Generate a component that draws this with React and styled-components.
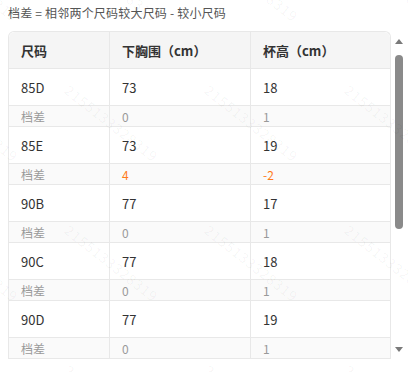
import React from 'react';
import styled, { createGlobalStyle } from 'styled-components';

const GlobalStyle = createGlobalStyle`
  body {
    margin: 0;
    background: #fff;
    font-family: "Microsoft YaHei", "Noto Sans CJK SC", "Liberation Sans", sans-serif;
  }
`;

const Page = styled.div`
  position: relative;
  padding: 4px 2px 0 8px;
  height: 372px;
  box-sizing: border-box;
  overflow: hidden;
`;

const Caption = styled.div`
  font-size: 12px;
  line-height: 17px;
  color: #555;
  letter-spacing: 0.2px;
  margin-bottom: 10px;
`;

const Frame = styled.div`
  display: flex;
  height: 328px;
`;

const Scroller = styled.div`
  flex: 1;
  overflow: hidden;
`;

const ScrollBar = styled.div`
  width: 15px;
  display: flex;
  flex-direction: column;
  background: #fff;
`;

const Arrow = styled.div`
  height: 20px;
  display: flex;
  align-items: center;
  justify-content: center;
  &::before {
    content: '';
    width: 0;
    height: 0;
    border-left: 4px solid transparent;
    border-right: 4px solid transparent;
    ${(p) => (p.$down ? 'border-top: 5px solid #7a7a7a;' : 'border-bottom: 5px solid #7a7a7a;')}
  }
`;

const Track = styled.div`
  flex: 1;
  padding: 4px 3px 0 4px;
`;

const Thumb = styled.div`
  height: 174px;
  border-radius: 4px;
  background: #8a8a8a;
`;

const Table = styled.table`
  width: 100%;
  border-collapse: separate;
  border-spacing: 0;
  border: 1px solid #e8e8e8;
  border-bottom: none;
  border-radius: 6px 6px 0 0;
  font-size: 13px;
  color: #333;
`;

const Th = styled.th`
  background: #f5f5f5;
  height: 36px;
  padding: 0 12px;
  text-align: left;
  font-weight: 700;
  color: #333;
  border-bottom: 1px solid #e8e8e8;
  border-left: ${(p) => (p.$first ? 'none' : '1px solid #e8e8e8')};
  &:first-child { border-top-left-radius: 6px; }
  &:last-child { border-top-right-radius: 6px; }
`;

const Td = styled.td`
  height: ${(p) => (p.$diff ? '20px' : '36px')};
  padding: 0 12px;
  background: ${(p) => (p.$diff ? '#fafafa' : '#fff')};
  color: ${(p) => (p.$warn ? '#ff7a1a' : p.$diff ? '#999' : '#333')};
  font-size: ${(p) => (p.$diff ? '12px' : '13px')};
  border-bottom: 1px solid #e8e8e8;
  border-left: ${(p) => (p.$first ? 'none' : '1px solid #e8e8e8')};
`;

const Watermark = styled.span`
  position: absolute;
  pointer-events: none;
  font-size: 14px;
  letter-spacing: 1px;
  color: rgba(0, 0, 0, 0.045);
  transform-origin: left top;
  transform: rotate(38deg);
  white-space: nowrap;
`;

const rows = [
  { size: '85D', chest: 73, cup: 18, dChest: 0, dCup: 1 },
  { size: '85E', chest: 73, cup: 19, dChest: 4, dCup: -2, warn: true },
  { size: '90B', chest: 77, cup: 17, dChest: 0, dCup: 1 },
  { size: '90C', chest: 77, cup: 18, dChest: 0, dCup: 1 },
  { size: '90D', chest: 77, cup: 19, dChest: 0, dCup: 1 },
];

const marks = [];
[-60, 80, 220, 360].forEach((y) => {
  [-67, 73, 213, 353].forEach((x) => marks.push({ x, y }));
});

export default function App() {
  return (
    <Page>
      <GlobalStyle />
      <Caption>档差 = 相邻两个尺码较大尺码 - 较小尺码</Caption>
      <Frame>
        <Scroller>
          <Table>
            <colgroup>
              <col style={{ width: 100 }} />
              <col style={{ width: 141 }} />
              <col />
            </colgroup>
            <thead>
              <tr>
                <Th $first>尺码</Th>
                <Th>下胸围（cm）</Th>
                <Th>杯高（cm）</Th>
              </tr>
            </thead>
            <tbody>
              {rows.map((r) => (
                <React.Fragment key={r.size}>
                  <tr>
                    <Td $first>{r.size}</Td>
                    <Td>{r.chest}</Td>
                    <Td>{r.cup}</Td>
                  </tr>
                  <tr>
                    <Td $first $diff>档差</Td>
                    <Td $diff $warn={r.warn}>{r.dChest}</Td>
                    <Td $diff $warn={r.warn}>{r.dCup}</Td>
                  </tr>
                </React.Fragment>
              ))}
            </tbody>
          </Table>
        </Scroller>
        <ScrollBar>
          <Arrow />
          <Track>
            <Thumb />
          </Track>
          <Arrow $down />
        </ScrollBar>
      </Frame>
      {marks.map((m) => (
        <Watermark key={`${m.x}-${m.y}`} style={{ left: m.x, top: m.y }}>
          2155133328319
        </Watermark>
      ))}
    </Page>
  );
}
